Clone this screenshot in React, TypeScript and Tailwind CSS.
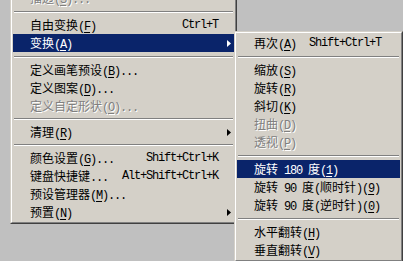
import React from "react";

type Item =
  | { sep: true; h?: number }
  | {
      sep?: false;
      text: string;
      shortcut?: string;
      arrow?: boolean;
      active?: boolean;
      disabled?: boolean;
    };

const latinCls = "font-['Liberation_Mono',monospace] text-[12px] tracking-[-1.2px]";
const cjkCls = "font-['Noto_Sans_CJK_SC',sans-serif] text-[12px]";

// "&X" marks the mnemonic letter, like a Windows menu resource
const Label: React.FC<{ text: string }> = ({ text }) => {
  const parts: { s: string; latin: boolean; u: boolean }[] = [];
  for (let i = 0; i < text.length; i++) {
    let c = text[i];
    let u = false;
    if (c === "&") {
      u = true;
      c = text[++i];
    }
    const latin = c.charCodeAt(0) < 128;
    const last = parts[parts.length - 1];
    if (last && last.latin === latin && !last.u && !u) last.s += c;
    else parts.push({ s: c, latin, u });
  }
  return (
    <span className="whitespace-pre">
      {parts.map((p, i) => (
        <span
          key={i}
          className={`${p.latin ? latinCls : cjkCls} ${p.u ? "underline underline-offset-[2px]" : ""}`}
        >
          {p.s}
        </span>
      ))}
    </span>
  );
};

const Arrow = () => (
  <svg width="4" height="7" viewBox="0 0 4 7" className="block">
    <polygon points="0,0 4,3.5 0,7" fill="currentColor" />
  </svg>
);

const MenuRow: React.FC<{ item: Exclude<Item, { sep: true }>; rightPad: string }> = ({ item, rightPad }) => {
  const tone = item.active
    ? "bg-[#0a246a] text-white"
    : item.disabled
    ? "text-[#808080] [text-shadow:1px_1px_0_#fff]"
    : "text-black";
  return (
    <div className={`flex h-[18px] items-center pl-[17px] leading-[18px] ${rightPad} ${tone}`}>
      <div className="flex-1">
        <Label text={item.text} />
      </div>
      {item.shortcut && <span className={`${latinCls} whitespace-pre`}>{item.shortcut}</span>}
      <div className="flex w-[16px] pl-[9px]">{item.arrow && <Arrow />}</div>
    </div>
  );
};

const Separator: React.FC<{ h?: number }> = ({ h = 9 }) => (
  <div className={`px-px ${h === 8 ? "h-[8px] pt-[3px]" : "h-[9px] pt-[4px]"}`}>
    <div className="h-px bg-[#808080]" />
    <div className="h-px bg-white" />
  </div>
);

const Menu: React.FC<{ items: Item[]; className: string; rightPad?: string }> = ({
  items,
  className,
  rightPad = "",
}) => (
  <div
    className={`absolute border border-t-[#d4d0c8] border-l-[#d4d0c8] border-r-[#404040] border-b-[#404040] ${className}`}
  >
    <div className="border border-t-white border-l-white border-r-[#808080] border-b-[#808080] bg-[#d4d0c8] p-px">
      {items.map((it, i) =>
        it.sep ? <Separator key={i} h={it.h} /> : <MenuRow key={i} item={it} rightPad={rightPad} />
      )}
    </div>
  </div>
);

const editMenu: Item[] = [
  { text: "描边(&S)...", disabled: true },
  { sep: true },
  { text: "自由变换(&F)", shortcut: "Ctrl+T" },
  { text: "变换(&A)", arrow: true, active: true },
  { sep: true },
  { text: "定义画笔预设(&B)..." },
  { text: "定义图案(&D)..." },
  { text: "定义自定形状(&O)...", disabled: true },
  { sep: true, h: 8 },
  { text: "清理(&R)", arrow: true },
  { sep: true, h: 8 },
  { text: "颜色设置(&G)...", shortcut: "Shift+Ctrl+K" },
  { text: "键盘快捷键...", shortcut: "Alt+Shift+Ctrl+K" },
  { text: "预设管理器(&M)..." },
  { text: "预置(&N)", arrow: true },
];

const transformMenu: Item[] = [
  { text: "再次(&A)", shortcut: "Shift+Ctrl+T" },
  { sep: true },
  { text: "缩放(&S)" },
  { text: "旋转(&R)" },
  { text: "斜切(&K)" },
  { text: "扭曲(&D)", disabled: true },
  { text: "透视(&P)", disabled: true },
  { sep: true },
  { text: "旋转 180 度(&1)", active: true },
  { text: "旋转 90 度(顺时针)(&9)" },
  { text: "旋转 90 度(逆时针)(&0)" },
  { sep: true },
  { text: "水平翻转(&H)" },
  { text: "垂直翻转(&V)" },
];

export default function App() {
  return (
    <div className="relative h-[261px] w-[403px] overflow-hidden bg-[#c0c0c0]">
      <Menu items={editMenu} className="left-[10px] top-[-14px] w-[227px]" />
      <Menu items={transformMenu} className="left-[234px] top-[31px] w-[169px]" rightPad="pr-[3px]" />
    </div>
  );
}
